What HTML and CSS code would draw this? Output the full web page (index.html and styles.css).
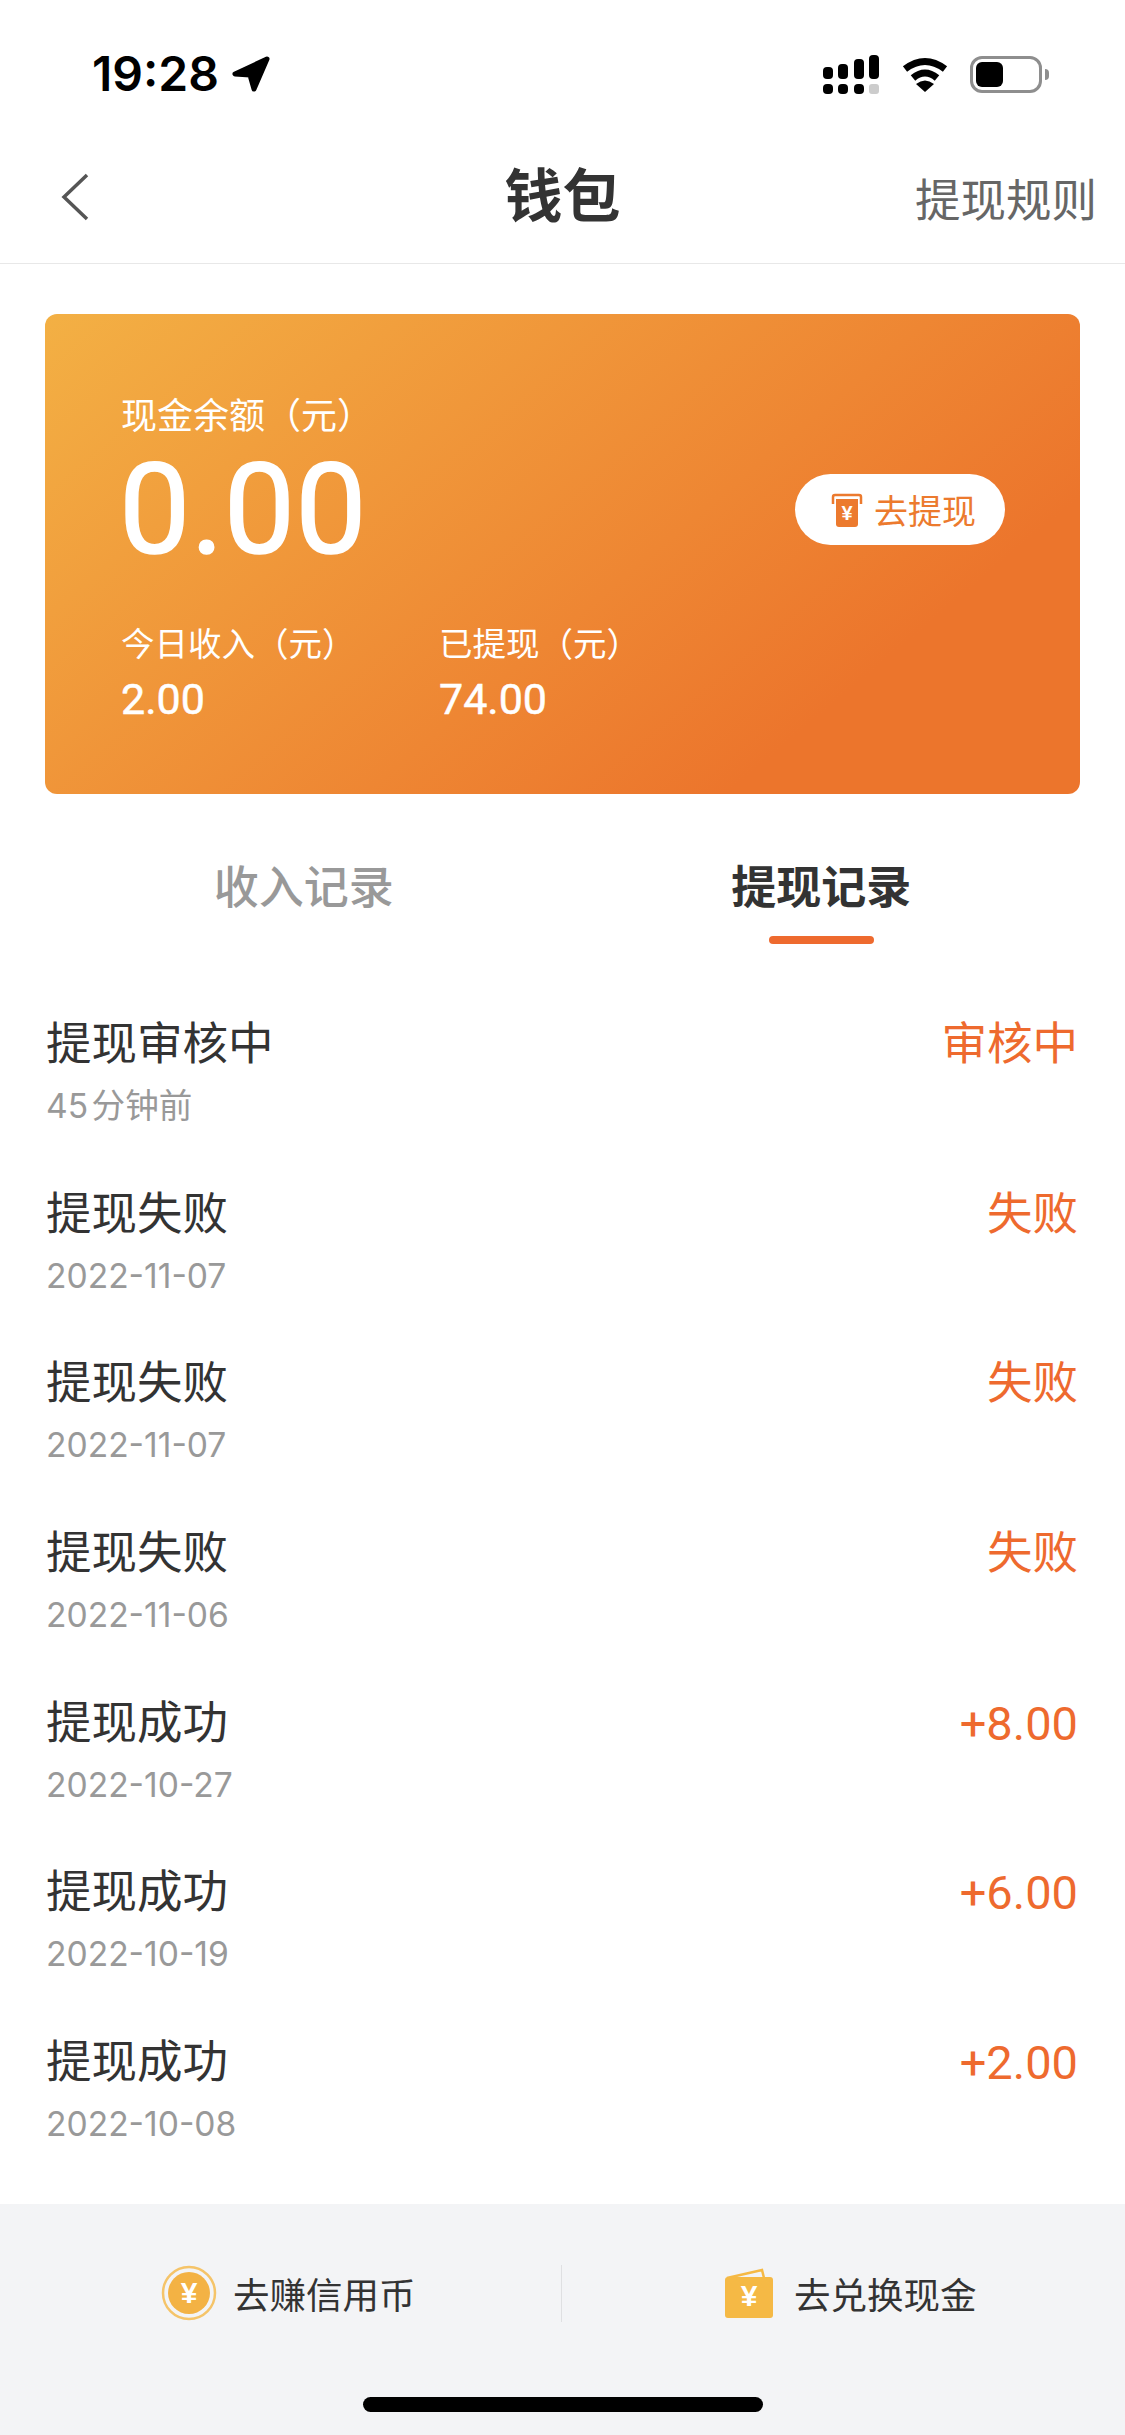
FILE: index.html
```html
<!DOCTYPE html>
<html lang="zh-CN">
<head>
  <meta charset="UTF-8">
  <title>钱包</title>
  <link rel="stylesheet" href="styles.css">
</head>
<body>

  <!-- Status bar -->
  <div class="status">
    <div class="status-left">
      <span class="time">19:28</span>
      <svg class="arrow" width="38" height="36" viewBox="0 0 38 36">
        <path d="M35 3 L3 18 L18 19 L22 33 Z" fill="#000" stroke="#000" stroke-width="5" stroke-linejoin="round"/>
      </svg>
    </div>
    <div class="status-right">
      <svg class="signal" width="56" height="39" viewBox="0 0 56 39">
        <rect x="0" y="12" width="10" height="12" rx="4"/>
        <rect x="15" y="9" width="10" height="15" rx="4"/>
        <rect x="31" y="4" width="10" height="20" rx="4"/>
        <rect x="46" y="0" width="10" height="24" rx="4"/>
        <rect x="0" y="29" width="10" height="10" rx="4"/>
        <rect x="15" y="29" width="10" height="10" rx="4"/>
        <rect x="31" y="29" width="10" height="10" rx="4"/>
        <rect x="46" y="29" width="10" height="10" rx="3" fill="#ccc"/>
      </svg>
      <svg class="wifi" width="48" height="35" viewBox="0 0 48 35">
        <path d="M4 12 Q24 -3 44 12" fill="none" stroke="#000" stroke-width="7"/>
        <path d="M12 21 Q24 11 36 21" fill="none" stroke="#000" stroke-width="7"/>
        <path d="M24 35 L15 27 Q24 20 33 27 Z"/>
      </svg>
      <div class="battery"><div class="battery-fill"></div></div>
      <div class="battery-nub"></div>
    </div>
  </div>

  <!-- Header -->
  <div class="nav">
    <svg class="back" width="28" height="48" viewBox="0 0 28 48">
      <path d="M26 2 L3 24 L26 46" fill="none" stroke="#555" stroke-width="3.5"/>
    </svg>
    <h1 class="nav-title">钱包</h1>
    <span class="nav-link">提现规则</span>
  </div>

  <div class="card">
    <div class="card-top">
      <div>
        <div class="card-label">现金余额（元）</div>
        <div class="balance">0.00</div>
      </div>
      <div class="withdraw-btn">
        <svg width="32" height="34" viewBox="0 0 32 34">
          <path d="M2 11 V4 Q2 2 4 2 H28 Q30 2 30 4 V11" fill="none" stroke="#ec7a2e" stroke-width="2.5"/>
          <path d="M5 6 H27 V31 Q27 34 24 34 H8 Q5 34 5 31 Z" fill="#ec7a2e"/>
          <text x="16" y="27" class="yen yen-small">¥</text>
        </svg>
        <span>去提现</span>
      </div>
    </div>
    <div class="stats">
      <div class="stat">
        <div class="stat-label">今日收入（元）</div>
        <div class="stat-value">2.00</div>
      </div>
      <div class="stat">
        <div class="stat-label">已提现（元）</div>
        <div class="stat-value">74.00</div>
      </div>
    </div>
  </div>

  <div class="tabs">
    <div class="tab">收入记录</div>
    <div class="tab active">提现记录</div>
  </div>

  <div class="records">
    <div class="record">
      <div>
        <div class="record-title">提现审核中</div>
        <div class="record-date">45 分钟前</div>
      </div>
      <div class="record-status">审核中</div>
    </div>
    <div class="record">
      <div>
        <div class="record-title">提现失败</div>
        <div class="record-date">2022-11-07</div>
      </div>
      <div class="record-status">失败</div>
    </div>
    <div class="record">
      <div>
        <div class="record-title">提现失败</div>
        <div class="record-date">2022-11-07</div>
      </div>
      <div class="record-status">失败</div>
    </div>
    <div class="record">
      <div>
        <div class="record-title">提现失败</div>
        <div class="record-date">2022-11-06</div>
      </div>
      <div class="record-status">失败</div>
    </div>
    <div class="record">
      <div>
        <div class="record-title">提现成功</div>
        <div class="record-date">2022-10-27</div>
      </div>
      <div class="record-status amount">+8.00</div>
    </div>
    <div class="record">
      <div>
        <div class="record-title">提现成功</div>
        <div class="record-date">2022-10-19</div>
      </div>
      <div class="record-status amount">+6.00</div>
    </div>
    <div class="record">
      <div>
        <div class="record-title">提现成功</div>
        <div class="record-date">2022-10-08</div>
      </div>
      <div class="record-status amount">+2.00</div>
    </div>
  </div>

  <!-- Footer -->
  <div class="footer">
    <div class="actions">
      <div class="action action-earn">
        <svg width="56" height="56" viewBox="0 0 56 56">
          <circle cx="28" cy="28" r="26" fill="none" stroke="#f5c469" stroke-width="2.5"/>
          <circle cx="28" cy="28" r="21" fill="#f3b244"/>
          <text x="28" y="38" class="yen">¥</text>
        </svg>
        <span>去赚信用币</span>
      </div>
      <div class="action-divider"></div>
      <div class="action action-exchange">
        <svg width="49" height="51" viewBox="0 0 49 51">
          <path d="M2 10 L37 2 L39 10" fill="none" stroke="#f5b945" stroke-width="2.5"/>
          <rect x="0" y="9" width="48" height="41" rx="3" fill="#f5b945"/>
          <text x="24" y="38" class="yen">¥</text>
        </svg>
        <span>去兑换现金</span>
      </div>
    </div>
    <div class="home-bar"></div>
  </div>

</body>
</html>
```

FILE: styles.css
```css
* { box-sizing: border-box; }
html, body { margin: 0; height: 100%; }
body {
  display: flex;
  flex-direction: column;
  font-family: "Liberation Sans", "Noto Sans CJK SC", sans-serif;
  color: #333;
  background: #fff;
}

.status {
  height: 130px;
  padding: 55px 76px 0 92px;
  display: flex;
  justify-content: space-between;
  align-items: flex-start;
}
.status-left { display: flex; align-items: center; height: 38px; }
.time {
  font-family: Inter, sans-serif;
  font-size: 48px;
  font-weight: 600;
  line-height: 38px;
  color: #000;
}
.arrow { margin-left: 13px; }
.status-right { display: flex; align-items: flex-start; }
.wifi { margin: 2px 0 0 22px; }
.battery {
  width: 72px;
  height: 37px;
  margin: 1px 0 0 21px;
  padding: 3px;
  border: 3px solid #8e8e8e;
  border-radius: 12px;
}
.battery-fill { width: 27px; height: 25px; background: #000; border-radius: 6px; }
.battery-nub {
  width: 4px;
  height: 11px;
  margin: 14px 0 0 3px;
  background: #8e8e8e;
  border-radius: 0 6px 6px 0;
}

.nav {
  height: 134px;
  padding: 0 28px;
  display: grid;
  grid-template-columns: 1fr auto 1fr;
  align-items: center;
  border-bottom: 1px solid #e8e8e8;
}
.back { margin-left: 33px; }
.nav-title { margin: 0; font-size: 58px; font-weight: 700; line-height: 70px; color: #333; }
.nav-link { justify-self: end; font-size: 45.5px; color: #666; }

.card {
  margin: 50px 45px 0;
  height: 480px;
  padding: 85px 75px 0 76px;
  border-radius: 12px;
  color: #fff;
  background: linear-gradient(140deg, #f3b044 0%, #ec752c 78%);
}
.card-top { display: flex; justify-content: space-between; align-items: flex-end; }
.card-label { font-size: 36px; line-height: 36px; }
.balance {
  margin: 13px 0 0 -2px;
  font-family: Roboto, sans-serif;
  font-size: 127px;
  -webkit-text-stroke: 1.5px #fff;
  line-height: 124px;
}
.withdraw-btn {
  width: 210px;
  height: 71px;
  margin-bottom: 27px;
  padding-left: 36px;
  display: flex;
  align-items: center;
  gap: 11px;
  border-radius: 36px;
  background: #fff;
  color: #ec7a2e;
  font-size: 34px;
}
.yen {
  font-size: 30px;
  font-weight: 700;
  fill: #fff;
  text-anchor: middle;
}
.yen-small { font-size: 20px; }
.stats { display: flex; margin-top: 55px; }
.stat { width: 318px; }
.stat-label { font-size: 33.5px; line-height: 36px; }
.stat-value {
  margin-top: 14px;
  font-family: Roboto, sans-serif;
  font-size: 43px;
  -webkit-text-stroke: 0.5px #fff;
  line-height: 44px;
}

.tabs {
  margin: 65px 45px 0;
  display: grid;
  grid-template-columns: 1fr 1fr;
  height: 85px;
}
.tab {
  text-align: center;
  font-size: 45px;
  font-weight: 500;
  line-height: 60px;
  color: #999;
}
.tab.active { color: #333; font-weight: 700; }
.tab.active::after {
  content: "";
  display: block;
  width: 105px;
  height: 8px;
  margin: 17px auto 0;
  border-radius: 4px;
  background: #ee6a2e;
}

.records {
  margin-top: 73px;
  padding: 0 47px 0 46px;
  display: flex;
  flex-direction: column;
  gap: 57.7px;
}
.record { display: flex; justify-content: space-between; align-items: flex-start; }
.record-title { font-size: 45.5px; line-height: 56px; color: #333; }
.record-date {
  margin-top: 10px;
  font-family: Inter, "Noto Sans CJK SC", sans-serif;
  font-size: 33.6px;
  word-spacing: -6px;
  line-height: 46px;
  color: #999;
}
.record-status { font-size: 45.5px; line-height: 56px; color: #ee6a2e; }
.amount { font-family: Roboto, sans-serif; font-size: 47px; }

.footer {
  margin-top: auto;
  height: 231px;
  background: #f3f4f6;
}
.actions { display: flex; align-items: center; height: 178px; }
.action {
  flex: 1;
  display: flex;
  align-items: center;
  font-size: 36.5px;
  color: #333;
}
.action-earn { padding-left: 161px; gap: 16px; }
.action-exchange { padding-left: 163px; gap: 20px; }
.action-divider { width: 1px; height: 57px; background: #dfe0e2; }
.home-bar {
  width: 400px;
  height: 15px;
  margin: 15px auto 0;
  border-radius: 8px;
  background: #000;
}
```
